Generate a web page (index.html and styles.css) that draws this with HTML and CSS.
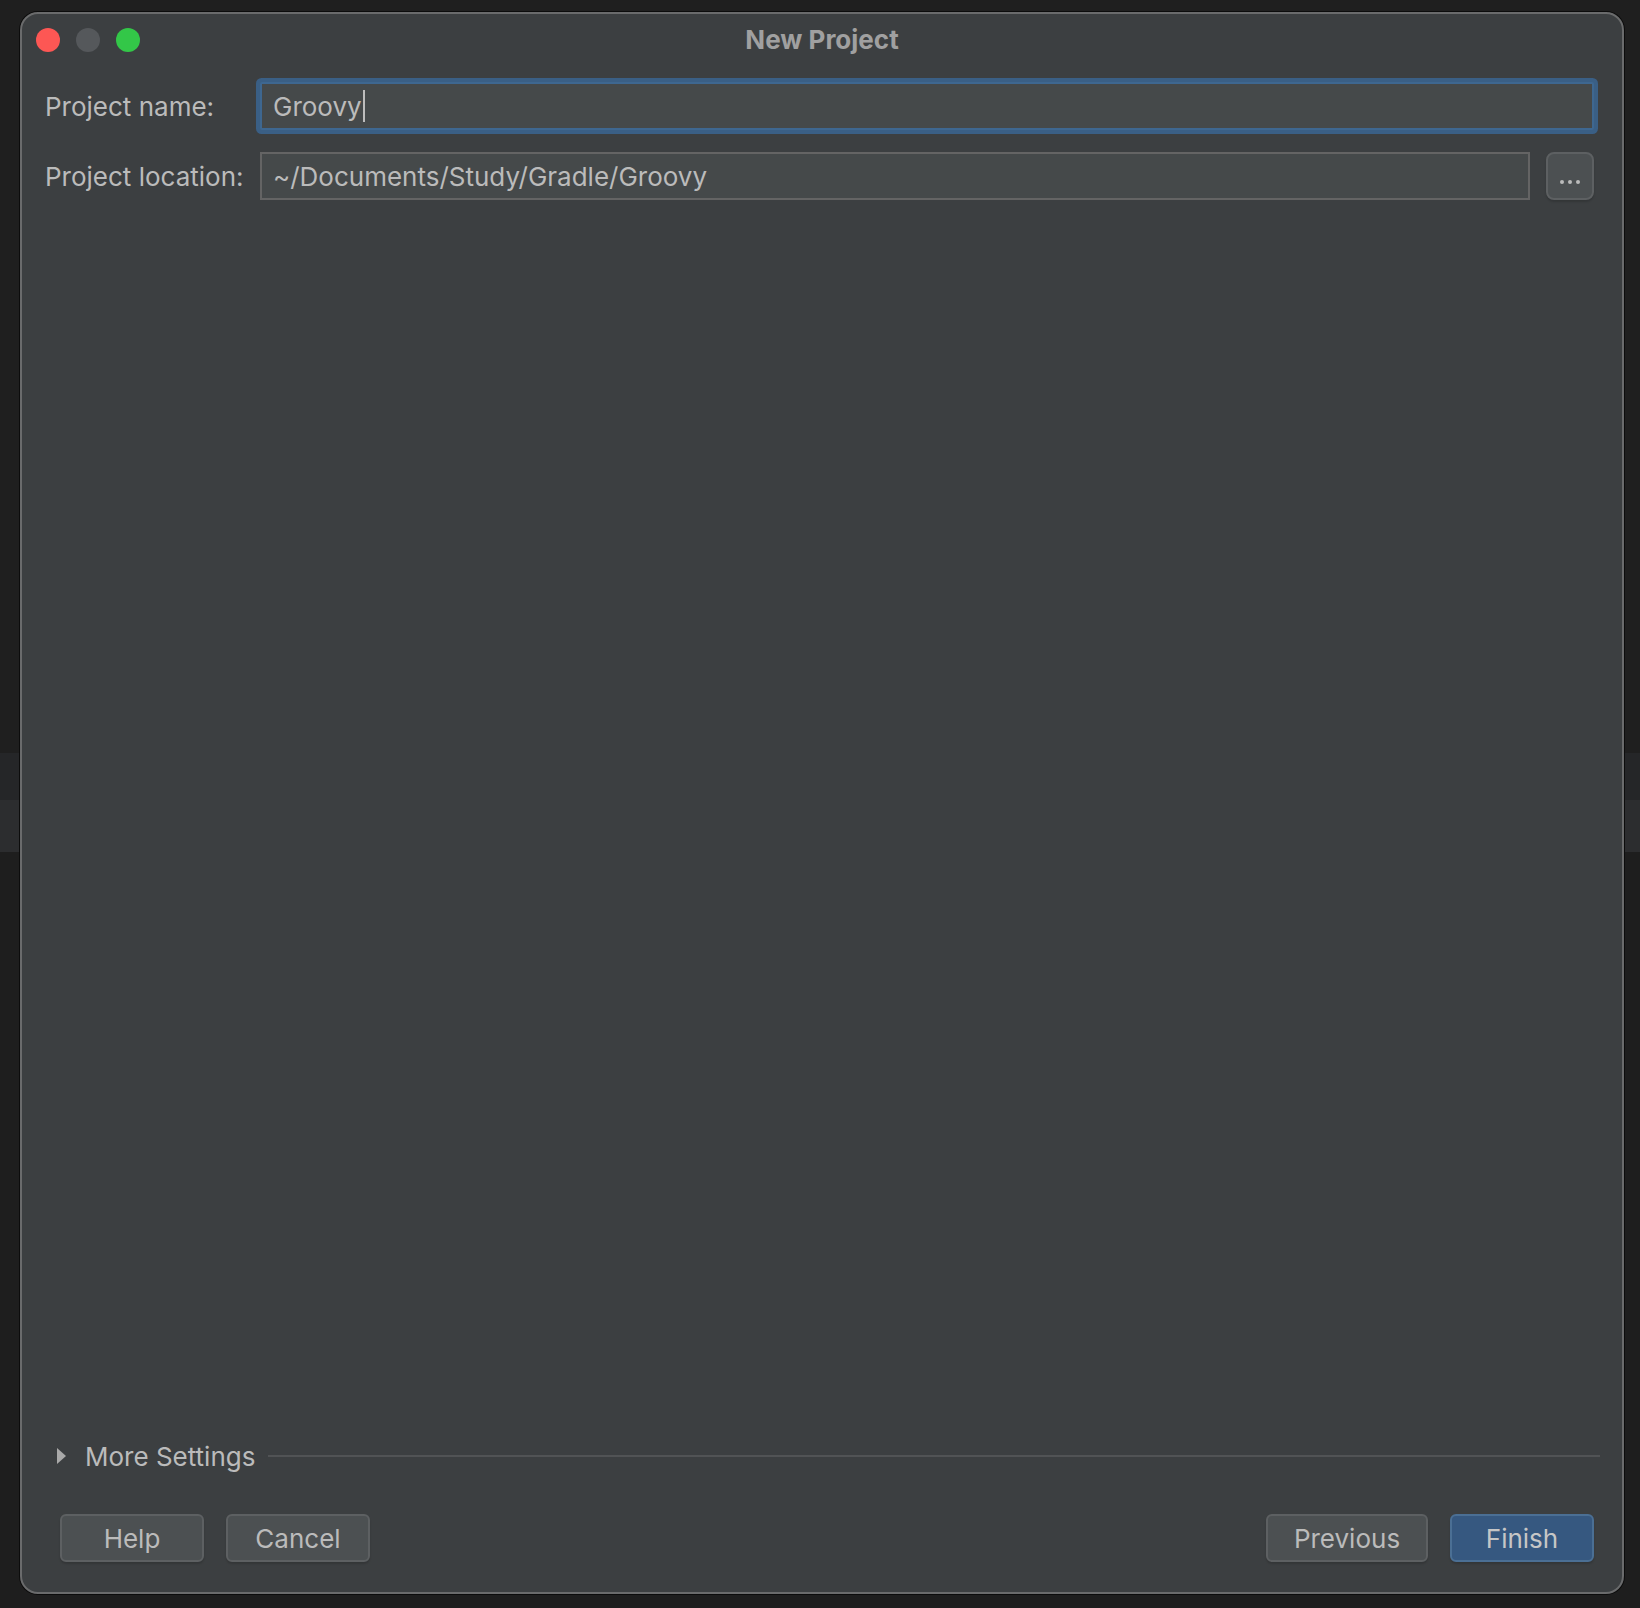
FILE: index.html
```html
<!DOCTYPE html>
<html lang="en">
<head>
    <meta charset="UTF-8">
    <title>New Project</title>
    <link rel="stylesheet" href="styles.css">
</head>
<body>
    <div class="window">
        <div class="titlebar">
            <div class="lights">
                <span class="light red"></span>
                <span class="light gray"></span>
                <span class="light green"></span>
            </div>
            <div class="title">New Project</div>
            <div></div>
        </div>

        <div class="form">
            <label class="label">Project name:</label>
            <div class="field focused">Groovy<span class="caret"></span></div>

            <label class="label">Project location:</label>
            <div class="location-row">
                <div class="field">~/Documents/Study/Gradle/Groovy</div>
                <button class="browse-btn">
                    <svg width="24" height="8" viewBox="0 0 24 8">
                        <circle cx="4" cy="4" r="2" fill="#bbbbbb"/>
                        <circle cx="12" cy="4" r="2" fill="#bbbbbb"/>
                        <circle cx="20" cy="4" r="2" fill="#bbbbbb"/>
                    </svg>
                </button>
            </div>
        </div>

        <div class="spacer"></div>

        <div class="more-settings">
            <svg class="arrow" width="9" height="16" viewBox="0 0 9 16">
                <polygon points="0,0 9,8 0,16" fill="#a9a9a9"/>
            </svg>
            <span class="more-text">More Settings</span>
            <div class="more-line"></div>
        </div>

        <div class="buttons">
            <button class="btn">Help</button>
            <button class="btn">Cancel</button>
            <button class="btn btn-prev">Previous</button>
            <button class="btn primary">Finish</button>
        </div>
    </div>
</body>
</html>
```

FILE: styles.css
```css
html, body {
    margin: 0;
    padding: 0;
}
body {
    height: 1608px;
    overflow: hidden;
    font-family: Inter, "Noto Sans", sans-serif;
    color: #bbbbbb;
    background: linear-gradient(to bottom,
        #1f1f1f 0, #1f1f1f 753px,
        #252628 753px, #252628 800px,
        #2c2d2f 800px, #2c2d2f 852px,
        #1e1e1e 852px, #1e1e1e 100%);
}
.window {
    margin: 12px 0 0 20px;
    width: 1604px;
    height: 1582px;
    box-sizing: border-box;
    background-color: #3c3f41;
    border: 2px solid #6a6b6c;
    border-radius: 18px;
    box-shadow: 0 0 0 1px #0c0c0c;
    display: flex;
    flex-direction: column;
}
.titlebar {
    height: 52px;
    display: grid;
    grid-template-columns: 1fr auto 1fr;
    align-items: center;
    padding-left: 14px;
    padding-right: 14px;
}
.lights {
    display: flex;
    gap: 16px;
}
.light {
    width: 24px;
    height: 24px;
    border-radius: 50%;
}
.light.red {
    background-color: #fd5754;
}
.light.gray {
    background-color: #55585b;
}
.light.green {
    background-color: #33c748;
}
.title {
    font-size: 26px;
    font-weight: bold;
    color: #a0a0a0;
    margin-top: -2px;
}
.form {
    padding: 16px 28px 0 23px;
    display: grid;
    grid-template-columns: 215px 1fr;
    row-gap: 22px;
    align-items: center;
}
.label {
    font-size: 26px;
    white-space: nowrap;
}
.field {
    height: 48px;
    box-sizing: border-box;
    background-color: #45494a;
    border: 2px solid #646464;
    padding-left: 11px;
    font-size: 26px;
    display: flex;
    align-items: center;
}
.field.focused {
    border-color: #3e6790;
    box-shadow: 0 0 0 4px #3a5f85;
    border-radius: 2px;
}
.caret {
    display: inline-block;
    width: 2px;
    height: 32px;
    background-color: #bdbdbd;
    margin-left: 1px;
}
.location-row {
    display: flex;
    gap: 16px;
}
.location-row .field {
    flex-grow: 1;
}
.browse-btn {
    width: 48px;
    height: 48px;
    flex-shrink: 0;
    box-sizing: border-box;
    background-color: #4c5052;
    border: 2px solid #5d6062;
    border-radius: 8px;
    padding: 0;
    display: flex;
    align-items: flex-end;
    justify-content: center;
    padding-bottom: 12px;
    box-shadow: 0 2px 2px rgba(0,0,0,0.15);
}
.spacer {
    flex-grow: 1;
}
.more-settings {
    height: 36px;
    display: flex;
    align-items: center;
    padding: 0 22px 0 35px;
}
.arrow {
    flex-shrink: 0;
    margin-right: 19px;
}
.more-text {
    font-size: 26px;
    margin-right: 13px;
}
.more-line {
    flex-grow: 1;
    height: 2px;
    background-color: #515355;
}
.buttons {
    margin-top: 40px;
    padding: 0 28px 30px 38px;
    display: flex;
    gap: 22px;
}
.btn {
    height: 48px;
    width: 144px;
    box-sizing: border-box;
    background-color: #4c5052;
    border: 2px solid #5d6062;
    border-radius: 6px;
    color: #bbbbbb;
    font-family: Inter, "Noto Sans", sans-serif;
    font-size: 26px;
    padding: 0;
    box-shadow: 0 2px 2px rgba(0,0,0,0.15);
}
.btn-prev {
    margin-left: auto;
    width: 162px;
}
.btn.primary {
    background-color: #365880;
    border-color: #4b6f94;
    color: #c6c6c6;
}
```
